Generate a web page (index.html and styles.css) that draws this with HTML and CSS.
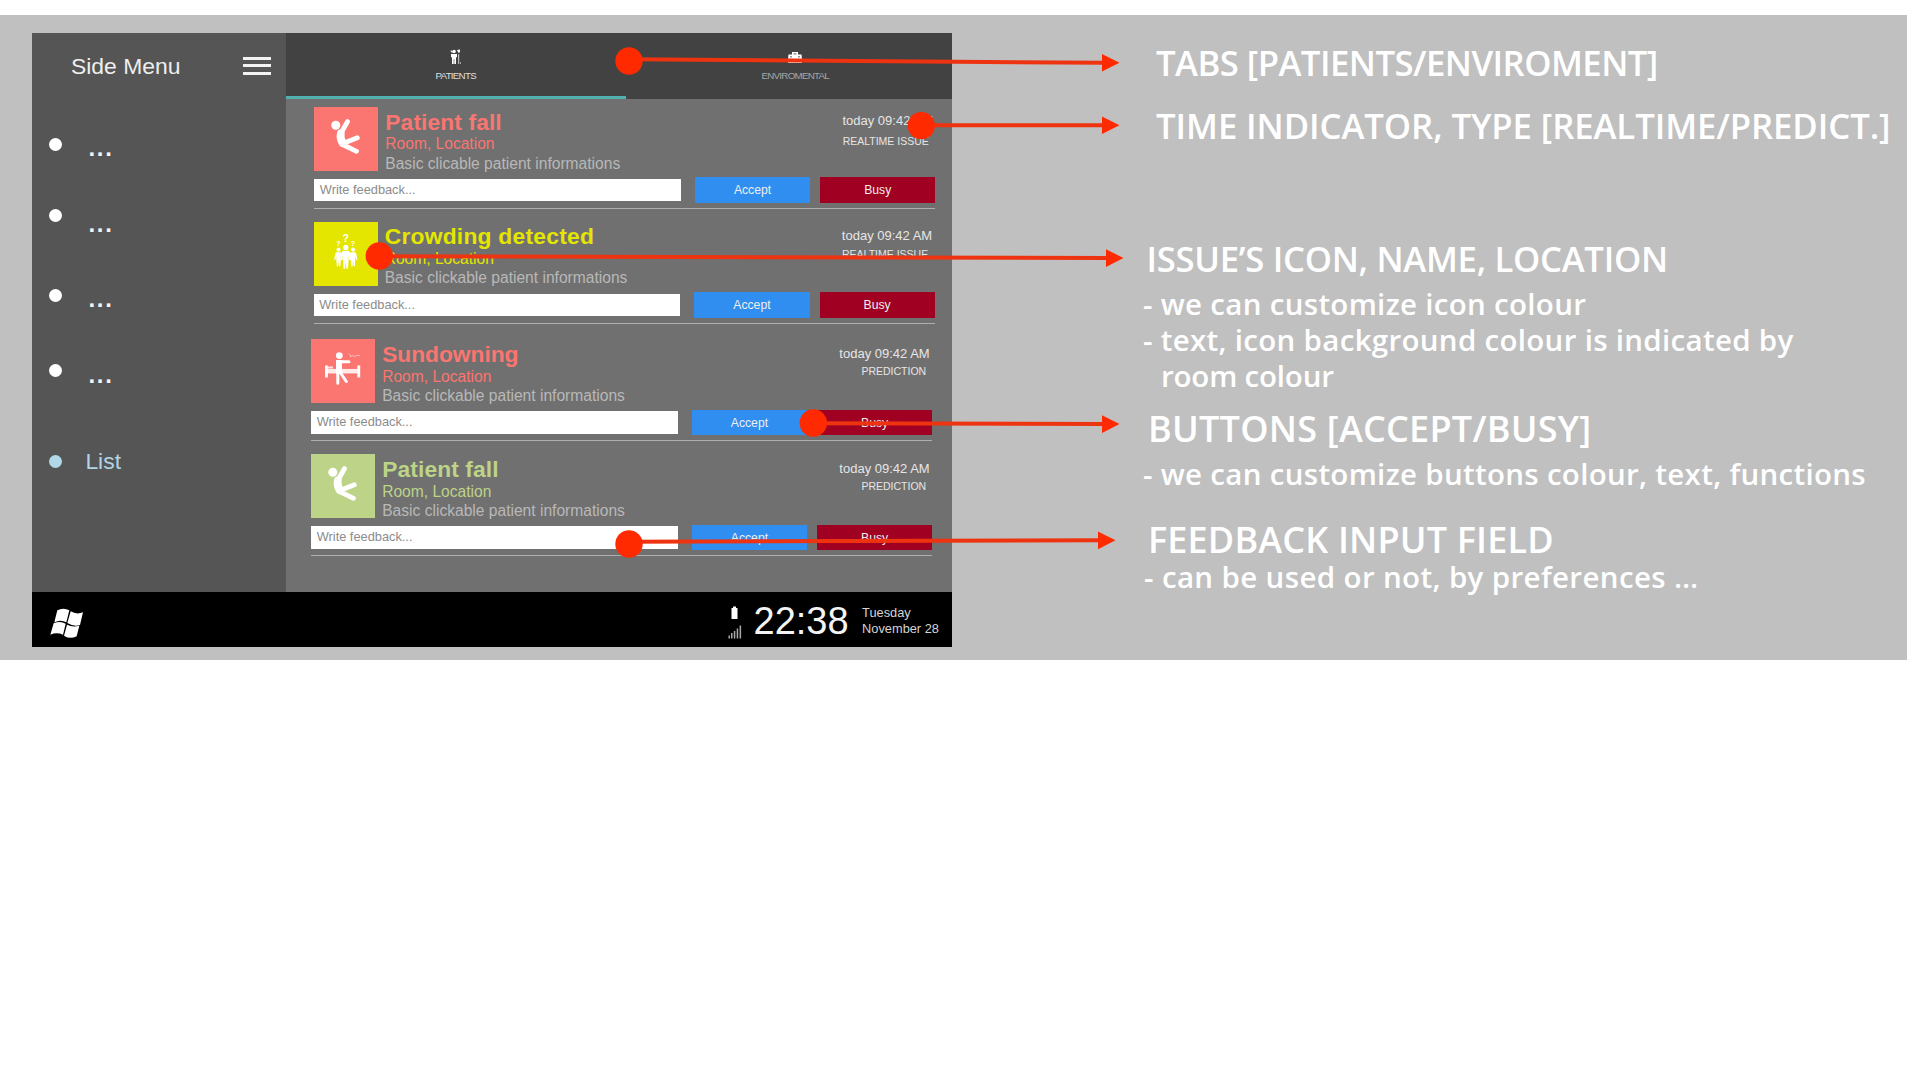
FILE: index.html
```
<!DOCTYPE html>
<html lang="en">
<head>
<meta charset="utf-8">
<title>Alert list overview</title>
<link rel="stylesheet" href="styles.css">
</head>
<body>
<svg width="0" height="0" class="defs">
  <symbol id="fall" viewBox="0 0 64 64">
    <circle cx="21.800" cy="18.200" r="4.500" fill="#fff"/>
    <g fill="none" stroke="#fff" stroke-linecap="round" stroke-linejoin="round">
      <path stroke-width="4.800" d="M33.600 14.500 27 26M29 36.500 43.300 30.800M28.500 37.500 42.500 44.300"/>
      <path stroke-width="7.800" d="M26.800 26.500Q25.800 31 28.500 35.800"/>
    </g>
  </symbol>
  <symbol id="person" viewBox="0 0 12 24">
    <circle cx="6" cy="2.600" r="2.600"/>
    <path d="M3.600 6h4.800q1.400 0 1.800 2l1.400 7.300-1.300.3L8.800 11v5l-.6 8H6.600L6 17 5.400 24H3.800L3.200 16v-5l-1.500 4.600-1.300-.3L1.800 8Q2.200 6 3.600 6Z"/>
  </symbol>
</svg>

<main class="board">
  <section class="tablet">
    <div class="screen">
      <aside class="side">
        <header class="side-head">
          <span>Side Menu</span>
          <span class="burger"><i></i><i></i><i></i></span>
        </header>
        <ul class="menu">
          <li class="m1"><i class="dot"></i><b>...</b></li>
          <li class="m2"><i class="dot"></i><b>...</b></li>
          <li class="m3"><i class="dot"></i><b>...</b></li>
          <li class="m4"><i class="dot"></i><b>...</b></li>
          <li class="m5"><i class="dot"></i><span>List</span></li>
        </ul>
      </aside>
      <div class="content">
        <nav class="tabs">
          <div class="tab active">
            <svg width="16" height="16" viewBox="0 0 16 16" fill="#fff"><circle cx="6" cy="2.500" r="1.800"/><path d="M3 5h6v3l-1 .5V15H6.300V10H5.700v5H4V8.500L3 8ZM3 1l1.500 2-.5 1L2.500 2Z"/><path d="M9 1l3-.5V3l-1.500 1z"/><path d="M10 5.500l1.200-.5v10h-1z" opacity=".7"/><path d="M12 13h1v2h-1z" opacity=".5"/></svg>
            <span>PATIENTS</span>
          </div>
          <div class="tab env">
            <svg width="16" height="16" viewBox="0 0 16 16" fill="#fff"><path d="M5 3h6v2.500h3.500l.5 5H1l.5-5H5ZM1 12.500h14V14H1Z"/><path d="M6.500 4h3v1.500h-3zM3 7h2v1.500H3zM11 7h2v1.500h-2z" fill="#999"/></svg>
            <span>ENVIROMENTAL</span>
          </div>
        </nav>
        <article class="card coral first">
          <div class="head">
            <svg class="icon" viewBox="0 0 64 64"><use href="#fall"/></svg>
            <div class="text"><h2>Patient fall</h2><h3>Room, Location</h3><p>Basic clicable patient informations</p></div>
            <div class="when"><time>today 09:42 AM</time><span class="live">REALTIME ISSUE</span></div>
          </div>
          <div class="actions"><div class="field">Write feedback...</div><div class="btn accept">Accept</div><div class="btn busy">Busy</div></div>
        </article>
        <article class="card yellow second">
          <div class="head">
            <svg class="icon" viewBox="0 0 64 64" fill="#fff">
              <use href="#person" x="19.800" y="25.300" width="9.500" height="19.500"/>
              <use href="#person" x="34.300" y="25.300" width="9.500" height="19.500"/>
              <use href="#person" x="25.800" y="22.300" width="12" height="25"/>
              <text x="31.800" y="20.300" font-size="10.500" font-weight="700" text-anchor="middle">?</text>
              <text x="24.500" y="23.900" font-size="7" font-weight="700" text-anchor="middle">?</text>
              <text x="39" y="23.900" font-size="7" font-weight="700" text-anchor="middle">?</text>
            </svg>
            <div class="text"><h2>Crowding detected</h2><h3>Room, Location</h3><p>Basic clickable patient informations</p></div>
            <div class="when"><time>today 09:42 AM</time><span class="live">REALTIME ISSUE</span></div>
          </div>
          <div class="actions"><div class="field">Write feedback...</div><div class="btn accept">Accept</div><div class="btn busy">Busy</div></div>
        </article>
        <article class="card coral third">
          <div class="head">
            <svg class="icon" viewBox="0 0 64 64" fill="none" stroke="#fff">
              <path stroke-width="2.800" d="M15.500 26.500V38.500M47.800 26.500V38.500"/>
              <path stroke-width="4.500" d="M16 32.200H47.800" opacity=".85"/>
              <path stroke-width="2" d="M17 28.500h5" opacity=".8"/>
              <circle cx="28.300" cy="16.600" r="3.400" fill="#fff" stroke="none"/>
              <path stroke-width="6" d="M28 21V35"/>
              <path stroke-width="3" stroke-linecap="round" d="M28 22.800H38M26.800 33V44.300M29 33 35.300 42.500"/>
              <path stroke-width=".8" d="M37.500 14.500l2 1.500v2M40 17.500l2-.8 2 .8 2-1.300 3 .3" opacity=".6"/>
            </svg>
            <div class="text"><h2>Sundowning</h2><h3>Room, Location</h3><p>Basic clickable patient informations</p></div>
            <div class="when"><time>today 09:42 AM</time><span>PREDICTION</span></div>
          </div>
          <div class="actions"><div class="field">Write feedback...</div><div class="btn accept">Accept</div><div class="btn busy">Busy</div></div>
        </article>
        <article class="card green fourth">
          <div class="head">
            <svg class="icon" viewBox="0 0 64 64"><use href="#fall"/></svg>
            <div class="text"><h2>Patient fall</h2><h3>Room, Location</h3><p>Basic clickable patient informations</p></div>
            <div class="when"><time>today 09:42 AM</time><span>PREDICTION</span></div>
          </div>
          <div class="actions"><div class="field">Write feedback...</div><div class="btn accept">Accept</div><div class="btn busy">Busy</div></div>
        </article>
      </div>
    </div>
    <footer class="taskbar">
      <svg class="logo" viewBox="148 805 102 95" fill="#fff"><path d="M170 812Q188 802 206 812L197 848Q180 838 161 848ZM210 815Q228 826 247 818L238 856Q220 862 200 850ZM159 851Q178 842 195 852L187 885Q168 877 149 885ZM199 855Q216 864 236 858L228 890Q208 900 190 888Z"/></svg>
      <svg class="status" viewBox="0 0 14 33"><path fill="#fff" d="M3.500 2H5V.5h3V2h1.500v11h-6z"/><path fill="#aaa" d="M.5 29.500h1.500v3H.5zM3 27h1.500v5.500H3zM5.800 25h1.500v7.500H5.800zM8.700 22.500h1.500v10H8.700zM11.600 19.500h1.500v13h-1.500z"/></svg>
      <div class="clock">22:38</div>
      <div class="date"><span>Tuesday</span><span>November 28</span></div>
    </footer>
  </section>

  <section class="notes">
    <h4 class="n1">TABS [PATIENTS/ENVIROMENT]</h4>
    <h4 class="n2">TIME INDICATOR, TYPE [REALTIME/PREDICT.]</h4>
    <h4 class="n3">ISSUE’S ICON, NAME, LOCATION</h4>
    <p class="n4">- we can customize icon colour</p>
    <p class="n5">- text, icon background colour is indicated by</p>
    <p class="n6">room colour</p>
    <h4 class="n7">BUTTONS [ACCEPT/BUSY]</h4>
    <p class="n8">- we can customize buttons colour, text, functions</p>
    <h4 class="n9">FEEDBACK INPUT FIELD</h4>
    <p class="n10">- can be used or not, by preferences …</p>
  </section>

  <svg class="arrows" viewBox="0 15 1907 645">
    <g stroke="#ee3311" stroke-width="4">
      <path d="M629 59.300 1104 62.800M921 125.200H1104M379 256.300 1108 258M813 423.300 1104 424M629 541.700 1100 540.300"/>
    </g>
    <g fill="#ff2a00">
      <circle cx="629" cy="61" r="13.700"/><circle cx="921.300" cy="125.600" r="13.700"/><circle cx="379.300" cy="256" r="13.700"/><circle cx="813.300" cy="423" r="13.700"/><circle cx="629" cy="544" r="13.700"/>
      <path d="M1102 54 1119.500 62.800 1102 71.500ZM1102 116.500 1119.500 125.200 1102 134ZM1106 249.300 1123.500 258 1106 267ZM1102 415.300 1119.500 424 1102 433ZM1098 531.500 1115.500 540.300 1098 549.300Z"/>
    </g>
  </svg>
</main>
</body>
</html>
```
FILE: styles.css
```
* { box-sizing: border-box; margin: 0; padding: 0; }
body { background: #fff; font-family: "Liberation Sans", Arial, sans-serif; }
.defs { display: block; }
.board { position: relative; display: flex; width: 1907px; height: 645px; margin-top: 15px; background: #c0c0c0; }
.tablet { width: 920px; height: 614px; margin: 18px 0 0 32px; }
.screen { display: flex; height: 558.500px; }

.side { width: 254px; background: #555; color: #eee; font-size: 22.900px; }
.side-head { display: flex; justify-content: space-between; align-items: center; height: 66.500px; padding: 0 15.500px 1px 39px; line-height: 26px; }
.burger { display: grid; gap: 4.200px; width: 27.500px; }
.burger i { height: 3.300px; background: #f2f2f2; }
.menu { list-style: none; padding-top: 31px; }
.menu li { display: flex; height: 27px; padding-left: 17px; line-height: 27px; }
.menu .dot { width: 13.400px; height: 13.400px; margin-top: 7px; border-radius: 50%; background: #fff; }
.menu b { margin: 8.500px 0 0 26px; font-size: 24px; letter-spacing: 1.800px; color: #f4f4f4; line-height: 18px; }
.menu .m2 { margin-top: 44px; }
.menu .m3 { margin-top: 53px; }
.menu .m4 { margin-top: 48.500px; }
.menu .m2 b { margin-top: 13px; }
.menu .m3 b { margin-top: 8.500px; }
.menu .m5 { margin-top: 63.500px; color: #b0d4e3; }
.menu .m5 .dot { background: #b0d8e8; }
.menu .m5 span { margin-left: 23px; }

.content { width: 666px; background: #707070; }
.tabs { display: grid; grid-template-columns: 339.500px 326.500px; height: 66px; background: #424242; }
.tab { display: flex; flex-direction: column; align-items: center; padding-top: 16px; color: #a5a5a5; font-size: 9.800px; letter-spacing: -.75px; }
.tab svg { display: block; }
.tab span { margin-top: 3.500px; line-height: 14px; }
.tab.active { border-bottom: 3px solid #4fb0ae; color: #dedede; }
.tab.env { padding-left: 13px; }

.card { width: 621px; height: 102px; border-bottom: 1.500px solid #aeaeae; }
.first { margin: 8px 0 0 28.300px; }
.second { margin: 12.900px 0 0 27.700px; }
.third { margin: 15.600px 0 0 25.200px; }
.fourth { margin: 13px 0 0 25.200px; }
.head { display: flex; height: 64px; }
.icon { width: 64px; height: 64px; background: var(--room); }
.text { flex: 1; padding: 2.600px 0 0 7px; }
.text h2 { font-size: 22.800px; line-height: 24px; letter-spacing: .1px; color: var(--room); margin-bottom: .7px; }
.second h2 { letter-spacing: .25px; }
.third h2 { letter-spacing: -.05px; }
.text h3 { font-size: 15.600px; font-weight: 400; line-height: 19.300px; color: var(--room); }
.text p { font-size: 15.600px; line-height: 19.300px; color: #b8b8b8; }
.coral { --room: #fb7571; }
.yellow { --room: #e4e600; }
.green { --room: #bdd387; }
.when { display: flex; flex-direction: column; align-items: flex-end; padding: 6.200px 2.500px 0 0; color: #e6e6e6; }
.when time { font-size: 13px; line-height: 16px; }
.when span { margin: 2.700px 3.500px 0 0; font-size: 10.500px; line-height: 14px; }
.when .live { margin-right: 4px; }
.first .live { margin-top: 5px; }
.actions { display: flex; align-items: center; height: 25.700px; margin-top: 6.300px; }
.field { width: 367px; height: 22.500px; padding-left: 5.500px; background: #fff; color: #8c8c8c; font-size: 12.800px; line-height: 22.500px; }
.btn { width: 115.300px; height: 25.700px; color: #eee; font-size: 12.200px; line-height: 26px; text-align: center; }
.accept { margin-left: 14px; background: #2f8ef0; }
.busy { margin-left: 10px; background: #a00022; }

.taskbar { display: flex; height: 55.500px; padding: 14px 0 0 17.500px; background: #000; color: #fff; }
.logo { width: 34px; height: 31.700px; margin-top: 2.500px; }
.status { width: 14px; height: 33px; margin-left: 644.500px; }
.clock { margin: -2px 0 0 11.500px; font-size: 38px; line-height: 34px; color: #f4f4f4; }
.date { display: grid; align-content: start; margin: -1px 0 0 13.500px; font-size: 12.800px; line-height: 16.700px; color: #d4d4d4; }

.notes { padding: 30.200px 0 0 204px; color: #fff; font-family: "Open Sans", "Noto Sans", sans-serif; white-space: nowrap; }
.notes h4 { font-size: 36px; line-height: 36px; font-weight: 600; }
.notes p { margin-left: -13px; font-size: 29.500px; line-height: 36px; font-weight: 600; letter-spacing: .3px; }
.notes .n1 { font-size: 34.700px; letter-spacing: -.54px; }
.notes .n2 { margin-top: 26.500px; font-size: 34.700px; letter-spacing: -.08px; }
.notes .n3 { margin: 97.500px 0 0 -9.500px; font-size: 34.700px; letter-spacing: -.3px; }
.notes .n4 { margin-top: 8.500px; }
.notes .n5 { margin-top: .4px; }
.notes .n6 { margin: -.4px 0 0 5px; letter-spacing: -.2px; }
.notes .n7 { margin: 16.900px 0 0 -8px; letter-spacing: .25px; }
.notes .n8 { margin-top: 9.500px; }
.notes .n9 { margin: 29.800px 0 0 -8px; letter-spacing: .17px; }
.notes .n10 { margin: 1.200px 0 0 -12px; letter-spacing: .36px; }
.arrows { position: absolute; left: 0; top: 0; width: 1907px; height: 645px; }
```
